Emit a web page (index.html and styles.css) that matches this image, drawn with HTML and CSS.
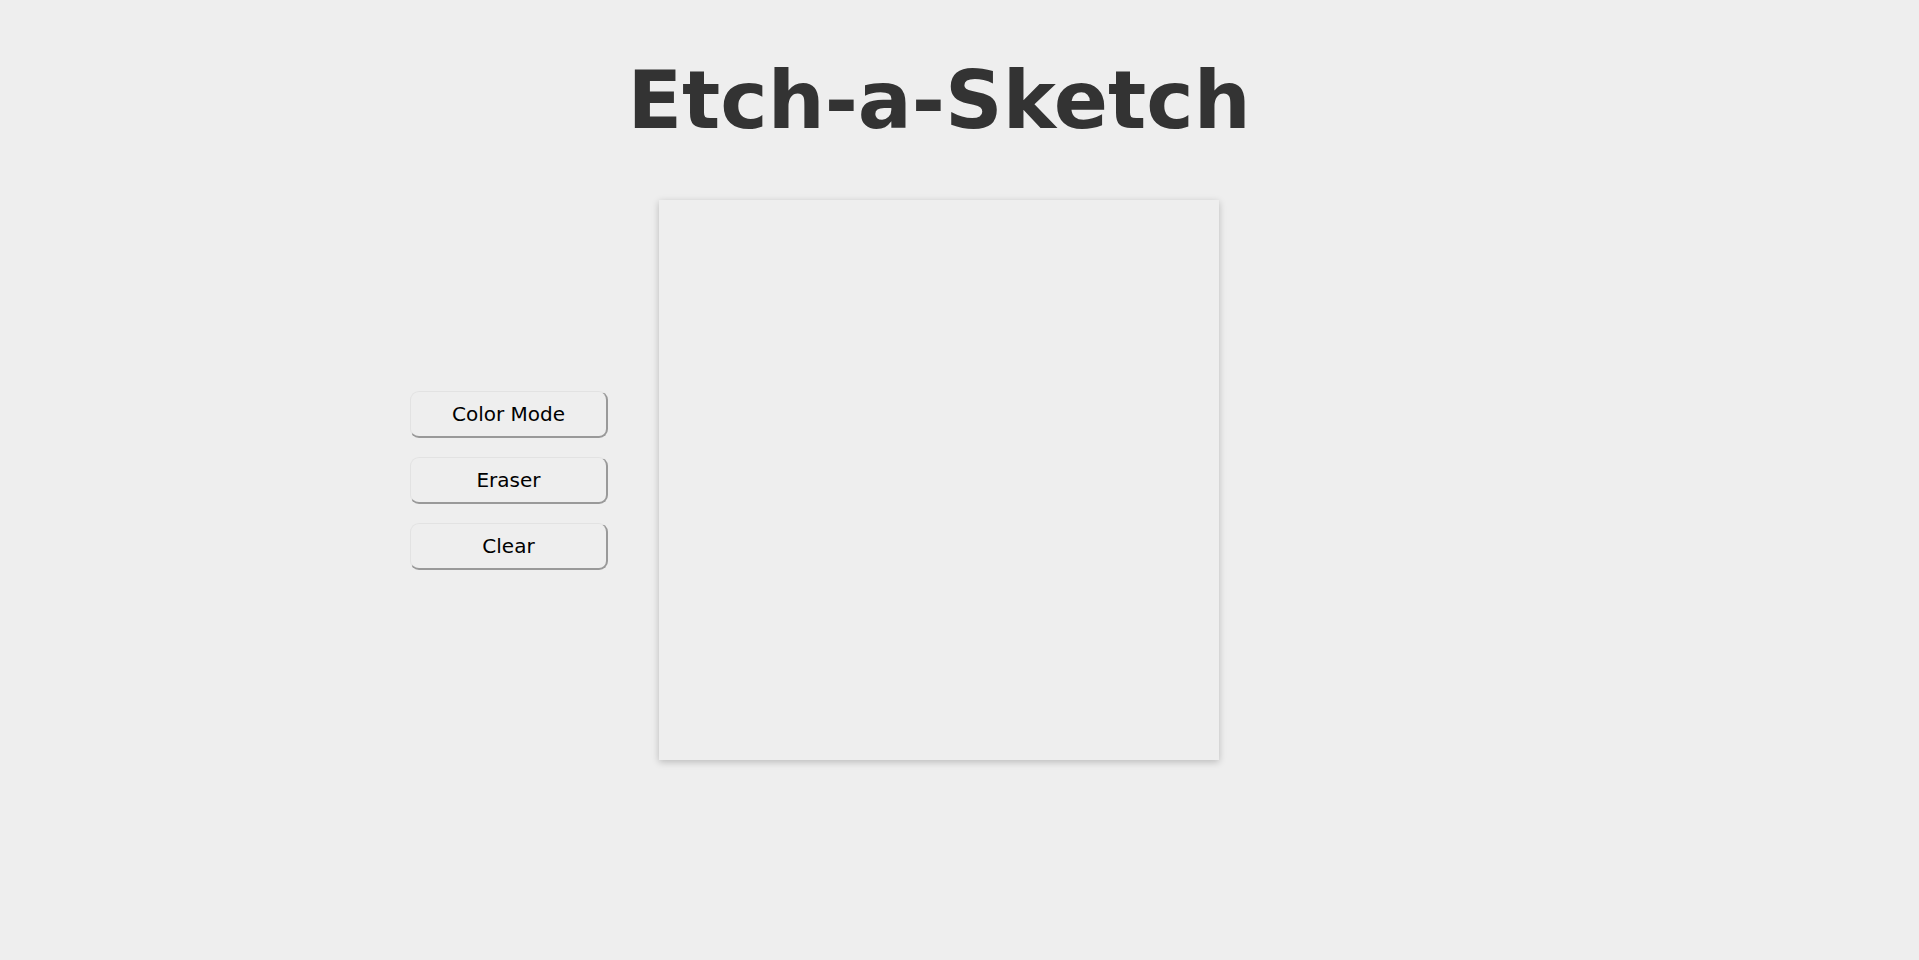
FILE: index.html
```html
<!DOCTYPE html>
<html lang="en">
<head>
<meta charset="utf-8">
<title>Etch-a-Sketch</title>
<link rel="stylesheet" href="styles.css">
</head>
<body>
  <h1 class="title">Etch-a-Sketch</h1>
  <main class="layout">
    <div class="controls">
      <button class="btn">Color Mode</button>
      <button class="btn">Eraser</button>
      <button class="btn">Clear</button>
    </div>
    <div class="board"></div>
    <div class="spacer"></div>
  </main>
</body>
</html>
```
FILE: styles.css
```css
html, body {
  background: #eeeeee;
}
body {
  margin: 0 41px 0 0;
  padding: 0 0 40px;
  font-family: "DejaVu Sans", sans-serif;
  color: #000;
}
.title {
  font-size: 80px;
  font-weight: bold;
  color: #333333;
  text-align: center;
  margin: 0.67em 0;
  line-height: normal;
}
.layout {
  display: flex;
  justify-content: center;
  align-items: center;
  gap: 51px;
}
.controls {
  width: 198px;
  display: flex;
  flex-direction: column;
  gap: 19px;
}
.spacer {
  width: 198px;
}
.btn {
  box-sizing: border-box;
  width: 198px;
  height: 47px;
  font-family: "DejaVu Sans", sans-serif;
  font-size: 20px;
  color: #000;
  background: #eeeeee;
  border-style: solid;
  border-width: 1px 2px 2px 1px;
  border-color: #e2e2e2 #999999 #999999 #e2e2e2;
  border-radius: 9px;
  padding: 0;
}
.board {
  width: 560px;
  height: 560px;
  background: #eeeeee;
  box-shadow: 0 2px 7px rgba(0, 0, 0, 0.22);
}
```
